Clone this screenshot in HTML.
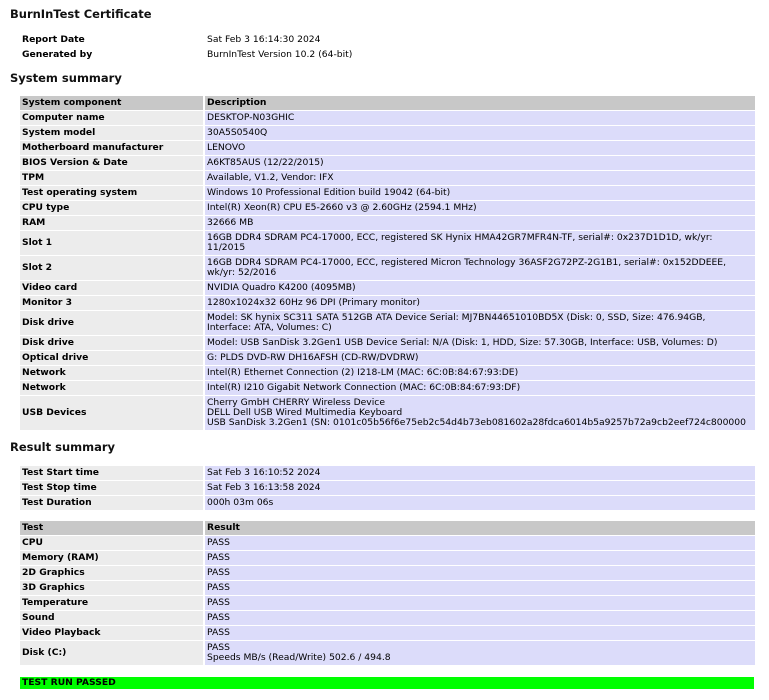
<!DOCTYPE html>
<html><head><meta charset="utf-8"><style>
body{margin:0;background:#fff;font-family:"DejaVu Sans","Liberation Sans",sans-serif;font-size:9.2px;color:#000;width:769px;height:700px;overflow:hidden;position:relative}
h1,h2{position:absolute;left:10px;margin:0;font-size:11.5px;font-weight:bold;color:#111}
table{position:absolute;left:18px;width:739px;border-collapse:separate;border-spacing:2px 1px;table-layout:fixed}
td{line-height:10px;padding:2px 2px;vertical-align:middle;white-space:nowrap;overflow:hidden}
td.l{width:179px;background:#ececec;font-weight:bold}
td.r{background:#dcdcfa}
tr.h td{background:#c8c8c8;font-weight:bold}
table.p td{background:none}
.g{position:absolute;left:20px;top:677px;width:734px;height:12px;background:#00ff00;font-weight:bold;line-height:12px;padding-left:2px;box-sizing:border-box}
</style></head><body>
<h1 style="top:7px">BurnInTest Certificate</h1>
<table class="p" style="top:32px"><tr><td class="l">Report Date</td><td>Sat Feb 3 16:14:30 2024</td></tr><tr><td class="l">Generated by</td><td>BurnInTest Version 10.2 (64-bit)</td></tr></table>
<h2 style="top:71px">System summary</h2>
<table style="top:95px">
<tr class="h"><td class="l">System component</td><td class="r">Description</td></tr>
<tr><td class="l">Computer name</td><td class="r">DESKTOP-N03GHIC</td></tr>
<tr><td class="l">System model</td><td class="r">30A5S0540Q</td></tr>
<tr><td class="l">Motherboard manufacturer</td><td class="r">LENOVO</td></tr>
<tr><td class="l">BIOS Version &amp; Date</td><td class="r">A6KT85AUS (12/22/2015)</td></tr>
<tr><td class="l">TPM</td><td class="r">Available, V1.2, Vendor: IFX</td></tr>
<tr><td class="l">Test operating system</td><td class="r">Windows 10 Professional Edition build 19042 (64-bit)</td></tr>
<tr><td class="l">CPU type</td><td class="r">Intel(R) Xeon(R) CPU E5-2660 v3 @ 2.60GHz (2594.1 MHz)</td></tr>
<tr><td class="l">RAM</td><td class="r">32666 MB</td></tr>
<tr><td class="l">Slot 1</td><td class="r">16GB DDR4 SDRAM PC4-17000, ECC, registered SK Hynix HMA42GR7MFR4N-TF, serial#: 0x237D1D1D, wk/yr:<br>11/2015</td></tr>
<tr><td class="l">Slot 2</td><td class="r">16GB DDR4 SDRAM PC4-17000, ECC, registered Micron Technology 36ASF2G72PZ-2G1B1, serial#: 0x152DDEEE,<br>wk/yr: 52/2016</td></tr>
<tr><td class="l">Video card</td><td class="r">NVIDIA Quadro K4200 (4095MB)</td></tr>
<tr><td class="l">Monitor 3</td><td class="r">1280x1024x32 60Hz 96 DPI (Primary monitor)</td></tr>
<tr><td class="l">Disk drive</td><td class="r">Model: SK hynix SC311 SATA 512GB ATA Device Serial: MJ7BN44651010BD5X (Disk: 0, SSD, Size: 476.94GB,<br>Interface: ATA, Volumes: C)</td></tr>
<tr><td class="l">Disk drive</td><td class="r">Model: USB SanDisk 3.2Gen1 USB Device Serial: N/A (Disk: 1, HDD, Size: 57.30GB, Interface: USB, Volumes: D)</td></tr>
<tr><td class="l">Optical drive</td><td class="r">G: PLDS DVD-RW DH16AFSH (CD-RW/DVDRW)</td></tr>
<tr><td class="l">Network</td><td class="r">Intel(R) Ethernet Connection (2) I218-LM (MAC: 6C:0B:84:67:93:DE)</td></tr>
<tr><td class="l">Network</td><td class="r">Intel(R) I210 Gigabit Network Connection (MAC: 6C:0B:84:67:93:DF)</td></tr>
<tr><td class="l">USB Devices</td><td class="r">Cherry GmbH CHERRY Wireless Device<br>DELL Dell USB Wired Multimedia Keyboard<br>USB SanDisk 3.2Gen1 (SN: 0101c05b56f6e75eb2c54d4b73eb081602a28fdca6014b5a9257b72a9cb2eef724c800000</td></tr>
</table>
<h2 style="top:440px">Result summary</h2>
<table style="top:465px">
<tr><td class="l">Test Start time</td><td class="r">Sat Feb 3 16:10:52 2024</td></tr>
<tr><td class="l">Test Stop time</td><td class="r">Sat Feb 3 16:13:58 2024</td></tr>
<tr><td class="l">Test Duration</td><td class="r">000h 03m 06s</td></tr>
</table>
<table style="top:520px">
<tr class="h"><td class="l">Test</td><td class="r">Result</td></tr>
<tr><td class="l">CPU</td><td class="r">PASS</td></tr>
<tr><td class="l">Memory (RAM)</td><td class="r">PASS</td></tr>
<tr><td class="l">2D Graphics</td><td class="r">PASS</td></tr>
<tr><td class="l">3D Graphics</td><td class="r">PASS</td></tr>
<tr><td class="l">Temperature</td><td class="r">PASS</td></tr>
<tr><td class="l">Sound</td><td class="r">PASS</td></tr>
<tr><td class="l">Video Playback</td><td class="r">PASS</td></tr>
<tr><td class="l">Disk (C:)</td><td class="r">PASS<br>Speeds MB/s (Read/Write) 502.6 / 494.8</td></tr>
</table>
<div class="g">TEST RUN PASSED</div>
</body></html>
